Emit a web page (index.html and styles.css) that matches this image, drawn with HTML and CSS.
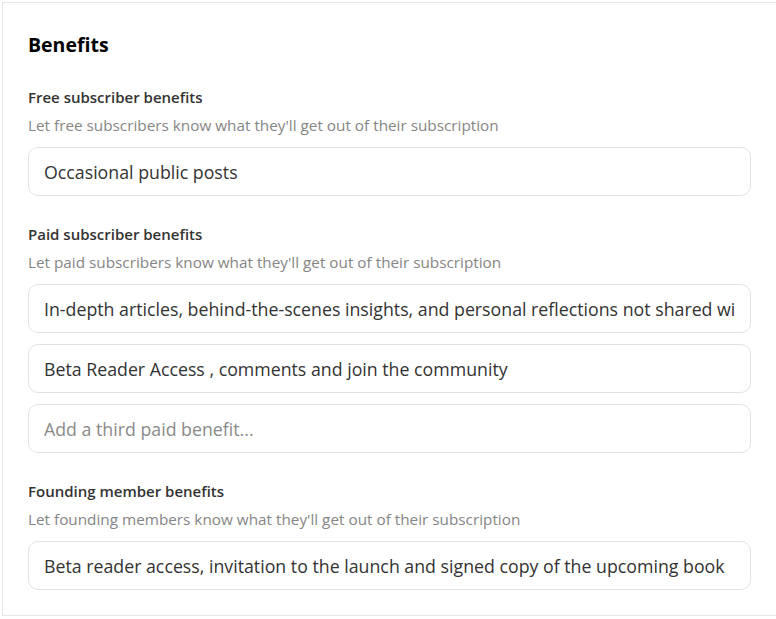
FILE: index.html
```html
<!DOCTYPE html>
<html lang="en">
<head>
  <meta charset="UTF-8">
  <title>Benefits</title>
  <link rel="stylesheet" href="styles.css">
</head>
<body>
  <section class="card">
    <h2 class="card-title">Benefits</h2>

    <div class="field">
      <label class="field-label">Free subscriber benefits</label>
      <p class="field-help">Let free subscribers know what they'll get out of their subscription</p>
      <input class="field-input" type="text" value="Occasional public posts">
    </div>

    <div class="field">
      <label class="field-label">Paid subscriber benefits</label>
      <p class="field-help">Let paid subscribers know what they'll get out of their subscription</p>
      <div class="input-list">
        <input class="field-input" type="text" value="In-depth articles, behind-the-scenes insights, and personal reflections not shared with anyone else">
        <input class="field-input" type="text" value="Beta Reader Access , comments and join the community">
        <input class="field-input" type="text" placeholder="Add a third paid benefit...">
      </div>
    </div>

    <div class="field">
      <label class="field-label">Founding member benefits</label>
      <p class="field-help">Let founding members know what they'll get out of their subscription</p>
      <input class="field-input" type="text" value="Beta reader access, invitation to the launch and signed copy of the upcoming book">
    </div>
  </section>
</body>
</html>
```

FILE: styles.css
```css
html, body {
  margin: 0;
  background: #fff;
}

body {
  font-family: 'Open Sans', 'Noto Sans', sans-serif;
  color: #222;
}

.card {
  box-sizing: border-box;
  width: 774px;
  height: 614px;
  margin: 2px 0 0 2px;
  padding: 28px 0 0 25px;
  border: 1px solid #e6e6e6;
  border-right: none;
}

.card-title {
  margin: 0;
  font-size: 19.5px;
  line-height: 28px;
  font-weight: 700;
  color: #000;
}

.field {
  margin-top: 28px;
  width: 723px;
}

.field-label {
  display: block;
  font-size: 15px;
  line-height: 20px;
  font-weight: 600;
  color: #333;
}

.field-help {
  margin: 8px 0 0;
  font-size: 15.3px;
  line-height: 20px;
  color: #858585;
}

.input-list {
  display: flex;
  flex-direction: column;
  gap: 11px;
  margin-top: 12px;
}

.field-input {
  box-sizing: border-box;
  display: block;
  width: 100%;
  height: 49px;
  margin-top: 12px;
  padding: 0 15px;
  border: 1px solid #e2e2e2;
  border-radius: 10px;
  background: #fff;
  font-family: inherit;
  font-size: 17.75px;
  color: #333;
  outline: none;
}

.input-list .field-input {
  margin-top: 0;
}

.field-input::placeholder {
  color: #8a8a8a;
}
```
